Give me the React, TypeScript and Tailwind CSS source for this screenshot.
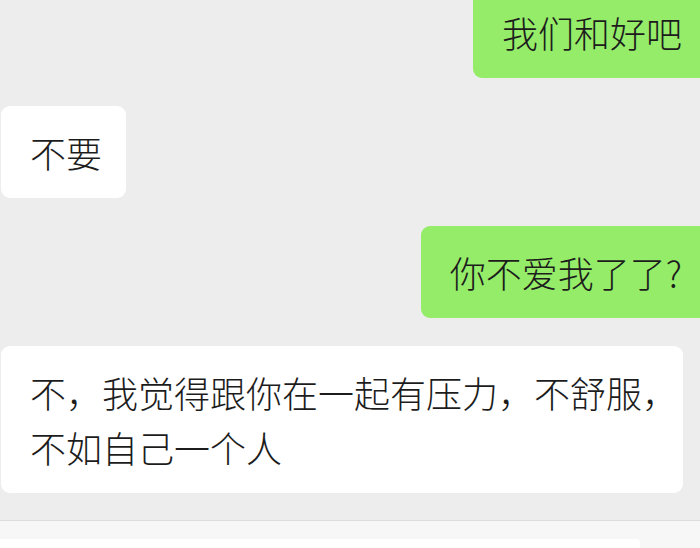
type Msg = { id: number; mine: boolean; lines: string[]; tight?: boolean };

const messages: Msg[] = [
  { id: 1, mine: true, lines: ["我们和好吧"] },
  { id: 2, mine: false, lines: ["不要"] },
  { id: 3, mine: true, lines: ["你不爱我了了?"] },
  { id: 4, mine: false, lines: ["不，我觉得跟你在一起有压力，不舒服，", "不如自己一个人"], tight: true },
];

const Bubble = ({ msg }: { msg: Msg }) => (
  <div className={msg.mine ? "flex justify-end -mr-[9px]" : "flex justify-start pl-[1px]"}>
    <div
      className={
        "rounded-[9px] py-[18.5px] pl-[29px] whitespace-nowrap text-[36px] font-light leading-[55px] text-[#1c1c1c] " +
        (msg.mine ? "bg-[#95ec69] pr-[27px]" : "bg-white") +
        (msg.tight ? " w-[682px]" : msg.mine ? "" : " pr-[24px]")
      }
    >
      {msg.lines.map((line, i) => (
        <div key={i}>{line}</div>
      ))}
    </div>
  </div>
);

export default function App() {
  return (
    <div
      className="w-[700px] h-[548px] overflow-hidden bg-[#ededed] flex flex-col"
      style={{ fontFamily: '"Noto Sans CJK SC", "Noto Sans", sans-serif' }}
    >
      <div className="flex-1 overflow-hidden">
        <div className="flex flex-col gap-[28px] -mt-[14px]">
          {messages.map((m) => (
            <Bubble key={m.id} msg={m} />
          ))}
        </div>
      </div>

      {/* input bar peeking in at the bottom */}
      <div className="h-[28px] border-t border-[#dcdcdc] bg-[#f7f7f7] flex flex-col">
        <div className="h-[18px]" />
        <div className="flex-1 flex">
          <div className="w-[640px] bg-white rounded-tr-[4px]" />
          <div className="flex-1" />
        </div>
      </div>
    </div>
  );
}
